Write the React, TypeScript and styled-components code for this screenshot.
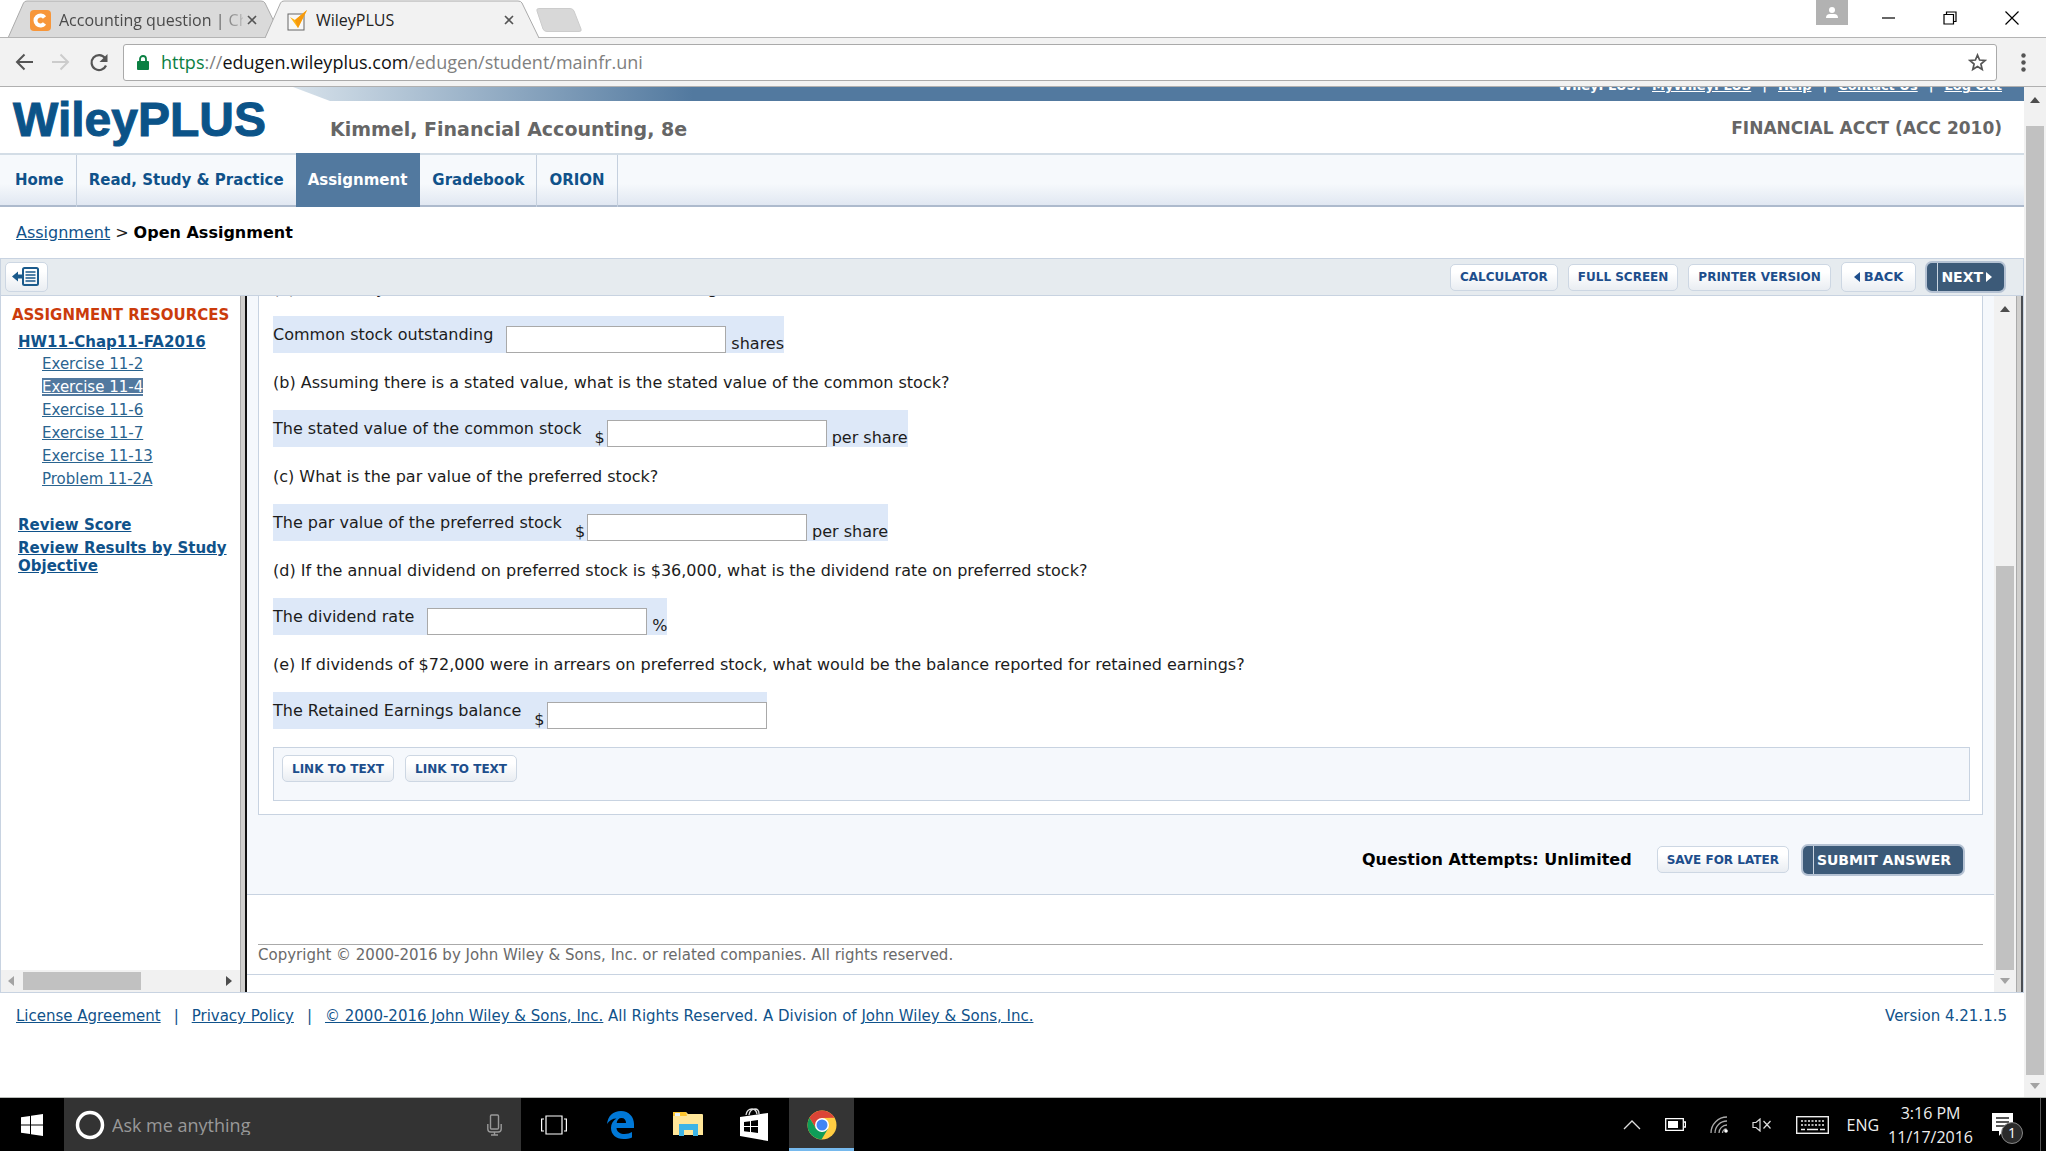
import React from "react";
import styled, { createGlobalStyle, css } from "styled-components";

const c = {
  link: "#10528a",
  linkSoft: "#2a648f",
  line: "#c8d3e1",
  pale: "#f5f8fc",
  steel: "#52799f",
  navy: "#3c5a78",
  row: "#dde8f8",
};

const ui = `"Open Sans", "Noto Sans", sans-serif`;
const body = `"DejaVu Sans", Verdana, sans-serif`;

const Global = createGlobalStyle`
  * { box-sizing: border-box; }
  body { margin: 0; overflow: hidden; background: #fff; font-family: ${body}; font-size: 15px; line-height: 20px; color: #1c1c1c; }
  button, input { font: inherit; margin: 0; }
  a { color: ${c.link}; }
  svg { display: block; flex: none; }
`;

const Screen = styled.div`
  display: flex;
  flex-direction: column;
  height: 100vh;
`;

/* ---------- browser chrome ---------- */

const TabStrip = styled.header`
  display: flex;
  height: 38px;
  padding-left: 8px;
  border-bottom: 1px solid #b4b4b4;
  background: #fff;
  font-family: ${ui};
`;

const Tab = styled.div<{ $active?: boolean }>`
  position: relative;
  z-index: ${(p) => (p.$active ? 1 : 0)};
  display: flex;
  align-items: center;
  gap: 8px;
  width: 274px;
  height: 38px;
  padding: 2px 25px 0 22px;
  color: ${(p) => (p.$active ? "#222" : "#4a4a4a")};
  font-size: 16px;
  & + & { margin-left: -17px; }
`;

const TabShape = styled.svg`
  position: absolute;
  inset: 0;
  z-index: -1;
`;

const TabTitle = styled.span<{ $fade?: boolean }>`
  flex: 1;
  min-width: 0;
  margin-right: -4px;
  overflow: hidden;
  white-space: nowrap;
  ${(p) => p.$fade && css`mask-image: linear-gradient(to right, #000 154px, transparent 192px);`}
`;

const IconButton = styled.button`
  display: grid;
  place-items: center;
  padding: 0;
  border: 0;
  background: none;
  color: inherit;
`;

const NewTab = styled(IconButton)`
  align-self: center;
  margin: 2px 0 0 -3px;
`;

const WindowButtons = styled.div`
  display: flex;
  align-items: flex-start;
  margin-left: auto;
  padding-right: 3px;
`;

const Person = styled(IconButton)`
  width: 32px;
  height: 25px;
  margin-right: 9px;
  background: #b2b2b2;
`;

const WindowButton = styled(IconButton)`
  width: 62px;
  height: 36px;
`;

const AddressBar = styled.div`
  display: flex;
  align-items: center;
  height: 49px;
  flex: none;
  padding: 6px 0 6px 15px;
  border-bottom: 1px solid #b0b0b0;
  background: #f2f2f2;
`;

const NavButton = styled(IconButton)`
  width: 18px;
  height: 18px;
  margin-right: 19px;
  &:nth-child(3) { margin-right: 14px; width: 20px; }
`;

const Omnibox = styled.div`
  display: flex;
  flex: 1;
  align-items: center;
  height: 37px;
  padding: 0 9px 0 13px;
  border: 1px solid #aaa;
  border-radius: 3px;
  background: #fff;
  font-family: ${ui};
  font-size: 18px;
  color: #808080;
`;

const Url = styled.span`
  flex: 1;
  margin-left: 12px;
  b { font-weight: 400; color: #111; }
  i { font-style: normal; color: #0b8043; }
`;

const Menu = styled(IconButton)`
  width: 49px;
  padding-left: 3px;
`;

/* ---------- scroll bars ---------- */

const Track = styled.div<{ $horizontal?: boolean }>`
  display: flex;
  flex: none;
  flex-direction: ${(p) => (p.$horizontal ? "row" : "column")};
  align-items: center;
  justify-content: space-between;
  background: #f1f1f1;
  ${(p) => (p.$horizontal ? "height: 22px; padding: 0 8px 0 7px;" : "width: 22px; padding: 10px 0 8px;")}
`;

const Thumb = styled.div`
  background: #c1c1c1;
`;
const OuterThumb = styled(Thumb)`
  width: 18px;
  flex: 1;
  margin: 23px 0 8px;
`;
const PaneThumb = styled(Thumb)`
  width: 18px;
  height: 404px;
  margin: auto 0 8px;
`;
const SideThumb = styled(Thumb)`
  width: 118px;
  height: 18px;
  margin: 0 auto 0 9px;
`;

const arrowPaths = {
  up: "M0 6 5 0l5 6z",
  down: "M0 0h10L5 6z",
  left: "M6 0v10L0 5z",
  right: "M0 0v10l6-5z",
};

function Arrow({ dir, color = "#4d4d4d" }: { dir: keyof typeof arrowPaths; color?: string }) {
  const flat = dir === "up" || dir === "down";
  return (
    <svg width={flat ? 10 : 6} height={flat ? 6 : 10} aria-hidden>
      <path d={arrowPaths[dir]} fill={color} />
    </svg>
  );
}

/* ---------- course page ---------- */

const Viewport = styled.div`
  display: flex;
  flex: 1;
  min-height: 0;
`;

const Page = styled.div`
  display: flex;
  flex: 1;
  flex-direction: column;
  min-width: 0;
`;

const TopLinks = styled.nav`
  display: flex;
  align-items: flex-end;
  justify-content: flex-end;
  gap: 11px;
  height: 14px;
  flex: none;
  margin-left: 293px;
  padding: 0 22px 7px 0;
  overflow: hidden;
  clip-path: polygon(0 0, 100% 0, 100% 100%, 37px 100%);
  background: linear-gradient(to right, #d6e1ea 0, #52799f 400px);
  color: #fff;
  font-size: 13px;
  font-weight: 700;
  line-height: 16px;
  a { color: #fff; }
`;

const Masthead = styled.div`
  display: flex;
  align-items: baseline;
  height: 52px;
  flex: none;
  padding: 1px 22px 0 13px;
  font-weight: 700;
  color: #666;
`;

const Logo = styled.div`
  width: 317px;
  color: #0b5388;
  font-family: "Liberation Sans", Arial, sans-serif;
  font-size: 48px;
  line-height: 36px;
  -webkit-text-stroke: 1px #0b5388;
`;

const BookTitle = styled.h1`
  flex: 1;
  margin: 0;
  font-size: 19px;
`;

const Course = styled.div`
  align-self: center;
  font-size: 17px;
`;

const MainNav = styled.nav`
  display: flex;
  height: 54px;
  flex: none;
  border-top: 2px solid #d3dde6;
  background: linear-gradient(#f6f9fc 55%, #dfe6f1);
  box-shadow: inset 0 -2px #adbacd;
`;

const NavTab = styled.a<{ $active?: boolean }>`
  display: flex;
  align-items: center;
  padding: 0 12px 3px;
  color: ${c.link};
  font-weight: 700;
  text-decoration: none;
  border-right: 1px solid #c5d0de;
  &:first-child { padding-left: 15px; }
  ${(p) =>
    p.$active &&
    css`
      margin: -2px 0 0 -1px;
      padding-top: 2px;
      border-color: ${c.steel};
      background: ${c.steel};
      color: #fff;
    `}
`;

const Crumbs = styled.div`
  display: flex;
  align-items: center;
  gap: 5px;
  height: 51px;
  flex: none;
  padding: 1px 16px 0;
  font-size: 16px;
  b { color: #000; }
`;

const Toolbar = styled.div`
  display: flex;
  align-items: center;
  gap: 10px;
  height: 38px;
  flex: none;
  padding: 0 18px 0 4px;
  border: 1px solid ${c.line};
  background: #e6ebef;
`;

const Soft = styled.button<{ $large?: boolean }>`
  display: flex;
  align-items: center;
  gap: 4px;
  height: ${(p) => (p.$large ? 30 : 27)}px;
  padding: 0 ${(p) => (p.$large ? 12 : 9)}px;
  border: 1px solid #cdd7e3;
  border-radius: 5px;
  background: linear-gradient(#fff 30%, #e9edf2);
  color: #1d4e8c;
  font-size: ${(p) => (p.$large ? 13 : 12)}px;
  font-weight: 700;
  white-space: nowrap;
`;

const PanelToggle = styled(Soft)`
  width: 43px;
  margin-right: auto;
  padding: 0 6px;
`;

const Strong = styled.button`
  display: flex;
  align-items: center;
  gap: 3px;
  height: 28px;
  margin: 0 1px;
  padding: 0 12px 0 0;
  border: 0;
  border-radius: 5px;
  box-shadow: 0 0 0 2px #b5c2d3;
  background: ${c.navy};
  color: #fff;
  font-size: 14px;
  font-weight: 700;
  white-space: nowrap;
  &::before {
    content: "";
    align-self: stretch;
    width: 10px;
    border-right: 1px solid #c9d4e0;
  }
`;

const Frames = styled.div`
  display: flex;
  flex: 1;
  min-height: 0;
  border: 1px solid ${c.line};
  border-top: 0;
`;

const Sidebar = styled.aside`
  display: flex;
  flex-direction: column;
  width: 239px;
  flex: none;
`;

const SideBody = styled.div`
  flex: 1;
  padding: 9px 11px 0;
  overflow: hidden;
  white-space: nowrap;
`;

const SideTitle = styled.h2`
  margin: 0 0 8px;
  color: #cb3b0b;
  font-size: 15px;
  line-height: 20px;
`;

const SideLink = styled.a`
  display: block;
  width: max-content;
  margin-left: 6px;
  font-weight: 700;
  line-height: 18px;
  margin-bottom: 5px;
`;

const Exercises = styled.ul`
  margin: -3px 0 25px 30px;
  padding: 0;
  list-style: none;
  line-height: 23px;
`;

const Exercise = styled.a<{ $current?: boolean }>`
  color: ${(p) => (p.$current ? "#fff" : c.linkSoft)};
  background: ${(p) => (p.$current ? c.steel : "none")};
`;

const Divider = styled.div<{ $dark: string }>`
  width: 7px;
  flex: none;
  border-left: 1px solid #aaa;
  border-right: 2px solid ${(p) => p.$dark};
  background: #d0cfcd;
`;

const Pane = styled.main`
  display: flex;
  flex: 1;
  flex-direction: column;
  justify-content: flex-end;
  min-width: 0;
  overflow: hidden;
`;

const Work = styled.form`
  padding: 0 11px;
  border-bottom: 1px solid ${c.line};
  background: ${c.pale};
`;

const Card = styled.section`
  padding: 0 12px 13px 14px;
  border: 1px solid ${c.line};
  background: #fff;
  font-size: 16px;
`;

const Question = styled.p`
  margin: 20px 0 17px;
`;

const Answer = styled.div`
  display: flex;
  width: max-content;
  height: 37px;
  background: ${c.row};
  line-height: 18px;
`;

const AnswerLabel = styled.label`
  padding-top: 10px;
  margin-right: 13px;
`;

const Field = styled.div`
  display: flex;
  align-items: flex-end;
  gap: 2px;
`;

const AnswerInput = styled.input`
  width: 220px;
  height: 27px;
  padding: 0 4px;
  border: 1px solid #a9a9a9;
  background: #fff;
`;

const Unit = styled.span`
  margin-left: 3px;
`;

const LinkBox = styled.div`
  display: flex;
  gap: 11px;
  height: 54px;
  margin-top: 18px;
  padding: 7px 8px;
  border: 1px solid ${c.line};
  background: ${c.pale};
`;

const Actions = styled.div`
  display: flex;
  align-items: center;
  justify-content: flex-end;
  gap: 13px;
  height: 79px;
  padding: 10px 19px 0 0;
`;

const Attempts = styled.strong`
  margin-right: 12px;
  color: #000;
  font-size: 16px;
`;

const Copyright = styled.p`
  margin: 49px 11px 0;
  padding-bottom: 9px;
  border-top: 1px solid #aaa;
  color: #6a6a6a;
`;

const PaneEnd = styled.div`
  height: 18px;
  flex: none;
  border-top: 1px solid ${c.line};
`;

const Footer = styled.footer`
  display: flex;
  justify-content: space-between;
  height: 104px;
  flex: none;
  padding: 13px 17px 0 16px;
  color: ${c.link};
`;

const Legal = styled.div`
  display: flex;
  gap: 13px;
`;

/* ---------- taskbar ---------- */

const Taskbar = styled.div`
  display: flex;
  height: 54px;
  flex: none;
  border-top: 1px solid #b8bcb8;
  background: #000;
  color: #eee;
  font-family: ${ui};
`;

const Start = styled(IconButton)`
  width: 64px;
`;

const Search = styled.label`
  display: flex;
  align-items: center;
  width: 457px;
  padding: 0 19px 0 11px;
  background: #333;
`;

const SearchInput = styled.input`
  flex: 1;
  min-width: 0;
  padding: 0 0 0 7px;
  border: 0;
  background: none;
  font-family: ${ui};
  font-size: 18px;
  &::placeholder { color: #999; opacity: 1; }
`;

const Task = styled(IconButton)<{ $open?: boolean }>`
  width: 65px;
  margin-right: 2px;
  ${(p) => p.$open && css`background: #343434; box-shadow: inset 0 -3px #76b9ed;`}
`;

const Tray = styled.div`
  display: flex;
  align-items: center;
  margin-left: auto;
  gap: 24px;
  font-size: 16px;
  border-right: 1px solid #555;
  margin-right: 5px;
`;

const Language = styled.span`
  margin-left: -6px;
`;

const Clock = styled.time`
  margin: 0 -5px 0 -15px;
  line-height: 24px;
  text-align: center;
`;

const Notice = styled(IconButton)`
  position: relative;
  margin-right: 26px;
`;

const Badge = styled.span`
  position: absolute;
  top: 9px;
  left: 9px;
  width: 22px;
  height: 22px;
  border: 1px solid #888;
  border-radius: 50%;
  background: #2b2b2b;
  color: #fff;
  font-size: 14px;
  line-height: 20px;
`;

const Close = () => (
  <svg width="10" height="10" stroke="#555" strokeWidth="1.6">
    <path d="M1 1l8 8M9 1l-8 8" />
  </svg>
);

function BrowserTab({ title, icon, active }: { title: string; icon: React.ReactNode; active?: boolean }) {
  return (
    <Tab $active={active}>
      <TabShape width="274" height="38" aria-hidden>
        <path
          d="M0 38 L15.500 3 Q16.500 1 19 1 H253 Q256 1 257 3 L274 38"
          fill={active ? "#f2f2f2" : "#dadada"}
          stroke="#aaa"
        />
        {!active && <path d="M0 37.500H274" stroke="#b4b4b4" />}
      </TabShape>
      {icon}
      <TabTitle $fade={!active}>{title}</TabTitle>
      <IconButton type="button" aria-label="Close tab">
        <Close />
      </IconButton>
    </Tab>
  );
}

const parts = [
  { id: "a", q: "(a) How many shares of common stock are outstanding?", label: "Common stock outstanding", unit: "shares" },
  { id: "b", q: "(b) Assuming there is a stated value, what is the stated value of the common stock?", label: "The stated value of the common stock", money: true, unit: "per share" },
  { id: "c", q: "(c) What is the par value of the preferred stock?", label: "The par value of the preferred stock", money: true, unit: "per share" },
  { id: "d", q: "(d) If the annual dividend on preferred stock is $36,000, what is the dividend rate on preferred stock?", label: "The dividend rate", unit: "%" },
  { id: "e", q: "(e) If dividends of $72,000 were in arrears on preferred stock, what would be the balance reported for retained earnings?", label: "The Retained Earnings balance", money: true },
];

const exercises = ["Exercise 11-2", "Exercise 11-4", "Exercise 11-6", "Exercise 11-7", "Exercise 11-13", "Problem 11-2A"];
const sections = ["Home", "Read, Study & Practice", "Assignment", "Gradebook", "ORION"];

function Chrome() {
  return (
    <>
      <TabStrip>
        <BrowserTab
          title="Accounting question | Ch"
          icon={
            <svg width="21" height="21">
              <rect width="21" height="21" rx="4" fill="#f7963a" />
              <path d="M14.500 7.500A5 5 0 1 0 14.500 13.500" fill="none" stroke="#fff" strokeWidth="4" />
            </svg>
          }
        />
        <BrowserTab
          active
          title="WileyPLUS"
          icon={
            <svg width="21" height="22" viewBox="0 0 21 22">
              <rect x="1" y="5" width="16" height="16" fill="#f8f8f8" stroke="#666" />
              <path d="M3 8l5 3L20 1 11 19z" fill="#fdb515" />
              <path d="M20 1 8 11l3 8z" fill="#f79a0c" />
            </svg>
          }
        />
        <NewTab type="button" aria-label="New tab">
          <svg width="46" height="24">
            <path d="M1 3Q0 .5 3 .5H34q3 0 4 2.500L45 21q1 2.500-2 2.500H11q-3 0-4-2.500z" fill="#d8d8d8" stroke="#ccc" />
          </svg>
        </NewTab>
        <WindowButtons>
          <Person type="button" aria-label="Profile">
            <svg width="12" height="14" fill="#fff">
              <circle cx="6" cy="4" r="3" />
              <path d="M0 12q0-4 4-4h4q4 0 4 4z" />
            </svg>
          </Person>
          <WindowButton type="button" aria-label="Minimize">
            <svg width="13" height="13">
              <path d="M0 6h13" stroke="#000" strokeWidth="1.200" />
            </svg>
          </WindowButton>
          <WindowButton type="button" aria-label="Restore">
            <svg width="14" height="14" fill="none" stroke="#000" strokeWidth="1.200">
              <path d="M1 3.500h9.500v9.500H1zM3.500 3.500V1H13v9.500h-2.500" />
            </svg>
          </WindowButton>
          <WindowButton type="button" aria-label="Close">
            <svg width="14" height="14" stroke="#000" strokeWidth="1.200">
              <path d="M.5.5l13 13M13.500.5l-13 13" />
            </svg>
          </WindowButton>
        </WindowButtons>
      </TabStrip>
      <AddressBar>
        <NavButton type="button" aria-label="Back">
          <svg width="18" height="18" fill="none" stroke="#555" strokeWidth="2">
            <path d="M18 9H2M9.500 1.500 2 9l7.500 7.500" />
          </svg>
        </NavButton>
        <NavButton type="button" aria-label="Forward">
          <svg width="18" height="18" fill="none" stroke="#ccc" strokeWidth="2">
            <path d="M0 9h16M8.500 1.500 16 9l-7.500 7.500" />
          </svg>
        </NavButton>
        <NavButton type="button" aria-label="Reload">
          <svg width="20" height="20" fill="none" stroke="#555" strokeWidth="2.200">
            <path d="M16 5A7.500 7.500 0 1 0 17 12.500" />
            <path d="M18.500 1v8h-8z" fill="#555" stroke="none" />
          </svg>
        </NavButton>
        <Omnibox>
          <svg width="12" height="15">
            <rect y="6" width="12" height="9" rx="1" fill="#0b8043" />
            <path d="M3 7V4a3 3 0 0 1 6 0v3" fill="none" stroke="#0b8043" strokeWidth="1.800" />
          </svg>
          <Url>
            <i>https</i>://<b>edugen.wileyplus.com</b>/edugen/student/mainfr.uni
          </Url>
          <IconButton type="button" aria-label="Bookmark">
            <svg width="19" height="19" viewBox="0 0 19 19" fill="none" stroke="#555" strokeWidth="1.700">
              <path d="M9.500 2l2.100 5 5.400.5-4.100 3.500 1.300 5.500-4.700-2.900-4.700 2.900 1.300-5.500L2 7.500 7.400 7z" />
            </svg>
          </IconButton>
        </Omnibox>
        <Menu type="button" aria-label="Menu">
          <svg width="5" height="19" fill="#555">
            <circle cx="2.500" cy="2.500" r="2.200" />
            <circle cx="2.500" cy="9.500" r="2.200" />
            <circle cx="2.500" cy="16.500" r="2.200" />
          </svg>
        </Menu>
      </AddressBar>
    </>
  );
}

function SidePanel() {
  return (
    <Sidebar>
      <SideBody>
        <SideTitle>ASSIGNMENT RESOURCES</SideTitle>
        <SideLink href="#hw">HW11-Chap11-FA2016</SideLink>
        <Exercises>
          {exercises.map((name, i) => (
            <li key={name}>
              <Exercise href="#exercise" $current={i === 1}>
                {name}
              </Exercise>
            </li>
          ))}
        </Exercises>
        <SideLink href="#score">Review Score</SideLink>
        <SideLink href="#results">
          Review Results by Study
          <br />
          Objective
        </SideLink>
      </SideBody>
      <Track $horizontal>
        <Arrow dir="left" color="#a3a3a3" />
        <SideThumb />
        <Arrow dir="right" />
      </Track>
    </Sidebar>
  );
}

function WorkPane() {
  return (
    <Pane>
      <Work>
        <Card>
          {parts.map((p) => (
            <React.Fragment key={p.id}>
              <Question>{p.q}</Question>
              <Answer>
                <AnswerLabel htmlFor={p.id}>{p.label}</AnswerLabel>
                <Field>
                  {p.money && <span>$</span>}
                  <AnswerInput id={p.id} />
                  {p.unit && <Unit>{p.unit}</Unit>}
                </Field>
              </Answer>
            </React.Fragment>
          ))}
          <LinkBox>
            <Soft type="button">LINK TO TEXT</Soft>
            <Soft type="button">LINK TO TEXT</Soft>
          </LinkBox>
        </Card>
        <Actions>
          <Attempts>Question Attempts: Unlimited</Attempts>
          <Soft type="button">SAVE FOR LATER</Soft>
          <Strong type="button">SUBMIT ANSWER</Strong>
        </Actions>
      </Work>
      <Copyright>Copyright © 2000-2016 by John Wiley &amp; Sons, Inc. or related companies. All rights reserved.</Copyright>
      <PaneEnd />
    </Pane>
  );
}

function CoursePage() {
  return (
    <Viewport>
      <Page>
        <TopLinks>
          <span>WileyPLUS:</span>
          <a href="#my">MyWileyPLUS</a>
          <span>|</span>
          <a href="#help">Help</a>
          <span>|</span>
          <a href="#contact">Contact Us</a>
          <span>|</span>
          <a href="#logout">Log Out</a>
        </TopLinks>
        <Masthead>
          <Logo>WileyPLUS</Logo>
          <BookTitle>Kimmel, Financial Accounting, 8e</BookTitle>
          <Course>FINANCIAL ACCT (ACC 2010)</Course>
        </Masthead>
        <MainNav>
          {sections.map((s) => (
            <NavTab key={s} href="#section" $active={s === "Assignment"}>
              {s}
            </NavTab>
          ))}
        </MainNav>
        <Crumbs>
          <a href="#assignment">Assignment</a>
          <span>&gt;</span>
          <b>Open Assignment</b>
        </Crumbs>
        <Toolbar>
          <PanelToggle $large type="button" aria-label="Hide resources">
            <svg width="28" height="20" fill="none" stroke="#1a5a8c" strokeWidth="2">
              <rect x="11" y="1" width="15" height="17" rx="1.500" />
              <path d="M13.500 5h10M13.500 8h10M13.500 11h10M13.500 14h10" strokeWidth="1.500" />
              <path d="M0 9.500l6-5v3h4v4H6v3z" fill="#1a5a8c" stroke="none" />
            </svg>
          </PanelToggle>
          <Soft type="button">CALCULATOR</Soft>
          <Soft type="button">FULL SCREEN</Soft>
          <Soft type="button">PRINTER VERSION</Soft>
          <Soft $large type="button">
            <Arrow dir="left" color="#1d4e8c" />
            BACK
          </Soft>
          <Strong type="button">
            NEXT
            <Arrow dir="right" color="#fff" />
          </Strong>
        </Toolbar>
        <Frames>
          <SidePanel />
          <Divider $dark="#111" />
          <WorkPane />
          <Track>
            <Arrow dir="up" />
            <PaneThumb />
            <Arrow dir="down" color="#a3a3a3" />
          </Track>
          <Divider $dark="#4a4d52" />
        </Frames>
        <Footer>
          <Legal>
            <a href="#license">License Agreement</a>
            <span>|</span>
            <a href="#privacy">Privacy Policy</a>
            <span>|</span>
            <span>
              <a href="#copyright">© 2000-2016 John Wiley &amp; Sons, Inc.</a> All Rights Reserved. A Division of{" "}
              <a href="#wiley">John Wiley &amp; Sons, Inc.</a>
            </span>
          </Legal>
          <span>Version 4.21.1.5</span>
        </Footer>
      </Page>
      <Track>
        <Arrow dir="up" />
        <OuterThumb />
        <Arrow dir="down" color="#a3a3a3" />
      </Track>
    </Viewport>
  );
}

function WindowsTaskbar() {
  return (
    <Taskbar>
      <Start type="button" aria-label="Start">
        <svg width="22" height="22" fill="#fff">
          <path d="M0 3.200l9-1.300v8.600H0zM10 1.700 22 0v10.500H10zM0 11.500h9v8.600l-9-1.300zM10 11.500h12V22l-12-1.700z" />
        </svg>
      </Start>
      <Search>
        <svg width="30" height="30">
          <circle cx="15" cy="15" r="12.500" fill="none" stroke="#fff" strokeWidth="3.500" />
        </svg>
        <SearchInput placeholder="Ask me anything" aria-label="Ask me anything" />
        <svg width="15" height="22" fill="none" stroke="#999" strokeWidth="1.400">
          <rect x="3.500" y="1" width="8" height="14" rx="1" />
          <path d="M.8 10v5q0 3 3 3h7.400q3 0 3-3v-5M7.500 18v3M4 21h7" />
        </svg>
      </Search>
      <Task type="button" aria-label="Task view">
        <svg width="26" height="20" fill="none" stroke="#fff" strokeWidth="1.200">
          <path d="M5 1h16v18H5zM3 4H.6v12H3M23 4h2.400v12H23" />
        </svg>
      </Task>
      <Task type="button" aria-label="Edge">
        <svg width="27" height="28" viewBox="0 0 27 28" fill="#0078d7">
          <path d="M0 13C1 5 6 0 14 0c8 0 13 6 13 13v4H9.500c.3 4 4 6 8 6 3 0 5.500-.8 7.500-2v5.500c-2.500 1-5.500 1.500-8.500 1.500C9 28 4 23.500 4 17c0-4 2-7.500 5.500-9.500C5.500 7.500 2 9.500 0 13zM9.700 12H19c0-3-1.500-5-4.500-5-2.700 0-4.500 2-4.800 5z" />
        </svg>
      </Task>
      <Task type="button" aria-label="File Explorer">
        <svg width="30" height="25">
          <path d="M0 1q0-1 1-1h12l2 2h14q1 0 1 1v20H0z" fill="#ffe698" />
          <path d="M0 0h13l1 4H0z" fill="#fdc62f" />
          <path d="M2 1h5v3H2z" fill="#e9f4fb" />
          <path d="M6 24V12h19v12h-5v-6h-9v6z" fill="#3db4e6" />
        </svg>
      </Task>
      <Task type="button" aria-label="Store">
        <svg width="29" height="33">
          <path d="M6 7q1-6 6-6 4 0 5 5M9 7q1-6 6-6 4 0 4 5" fill="none" stroke="#ddd" strokeWidth="1.300" />
          <path d="M0 9l28-4v28L0 28z" fill="#fff" />
          <path d="M4 14l6-.8V18H4zM11 13l7-.9V18h-7zM4 19h6v5l-6-.7zM11 19h7v6l-7-.9z" fill="#000" />
        </svg>
      </Task>
      <Task $open type="button" aria-label="Chrome">
        <svg width="30" height="30" viewBox="0 0 30 30">
          <circle cx="15" cy="15" r="14.500" fill="#ffcd42" />
          <path d="M2.500 7.700A14.500 14.500 0 0 1 27.500 7.800L15 8 9 18.600z" fill="#db4437" />
          <path d="M2.500 7.700A14.500 14.500 0 0 0 14.500 29.500L21 18.800 15 22 9 18.600z" fill="#0f9d58" />
          <circle cx="15" cy="15" r="7" fill="#fff" />
          <circle cx="15" cy="15" r="5.500" fill="#4285f4" />
        </svg>
      </Task>
      <Tray>
        <svg width="18" height="11" fill="none" stroke="#ddd" strokeWidth="1.300">
          <path d="M1 10l8-8 8 8" />
        </svg>
        <svg width="21" height="13">
          <path d="M.7.7h17.600v11.600H.7zM19 4h1.500v5H19" fill="none" stroke="#fff" strokeWidth="1.300" />
          <rect x="3" y="3" width="10" height="7" fill="#fff" />
        </svg>
        <svg width="18" height="17" fill="none" stroke="#aaa" strokeWidth="1.300">
          <path d="M1 17A16 16 0 0 1 17 1M5 17A12 12 0 0 1 17 5M9 17a8 8 0 0 1 8-8" />
          <path d="M12.500 17a4 4 0 0 1 4-4" />
          <circle cx="16" cy="15" r="1.800" fill="#fff" stroke="none" />
        </svg>
        <svg width="20" height="14" fill="none" stroke="#ddd" strokeWidth="1.200">
          <path d="M1 4.500h3L8 1v12L4 9.500H1zM11.500 3l7 7.500M18.500 3l-7 7.500" />
        </svg>
        <svg width="33" height="18" fill="none" stroke="#eee" strokeWidth="1.400">
          <rect x=".7" y=".7" width="31.600" height="16.600" />
          <path d="M5 5h24M5 9h24" strokeDasharray="2 1.500" />
          <path d="M5 13.500h4M11 13.500h11M24 13.500h5" />
        </svg>
        <Language>ENG</Language>
        <Clock>
          3:16 PM
          <br />
          11/17/2016
        </Clock>
        <Notice type="button" aria-label="Notifications">
          <svg width="22" height="24">
            <path d="M0 0h21v18H11l-4 5v-5H0z" fill="#fff" />
            <path d="M4 5h13M4 9h13M4 13h9" stroke="#222" strokeWidth="1.500" />
          </svg>
          <Badge>1</Badge>
        </Notice>
      </Tray>
    </Taskbar>
  );
}

export default function App() {
  return (
    <>
      <Global />
      <Screen>
        <Chrome />
        <CoursePage />
        <WindowsTaskbar />
      </Screen>
    </>
  );
}
